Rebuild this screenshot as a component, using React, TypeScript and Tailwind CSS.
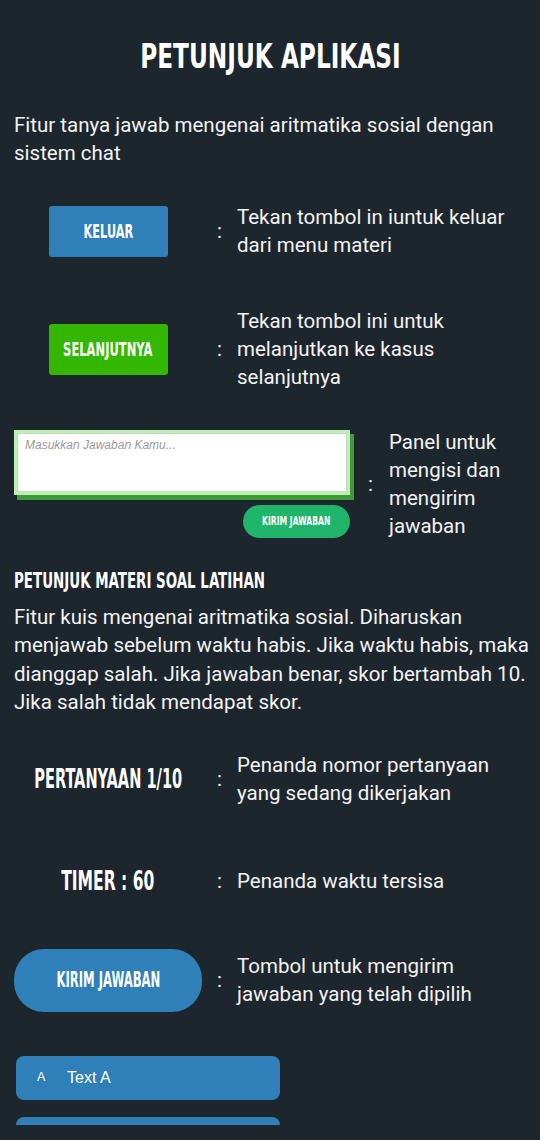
import React from "react";

const body = "font-['Roboto',sans-serif]";
const bebas = "font-['DejaVu_Sans_Condensed',sans-serif] font-bold text-white whitespace-nowrap inline-block shrink-0";

function Row({ left, children, top }: { left: React.ReactNode; children: React.ReactNode; top?: string }) {
  return (
    <div className={`flex items-center ${top ?? ""}`}>
      <div className="w-[188px] flex justify-center items-center shrink-0 leading-[28px]">{left}</div>
      <div className="w-[35px] text-center shrink-0 text-[20.5px] leading-[28px]">:</div>
      <div className="w-[280px] text-[20.5px] leading-[28px]">{children}</div>
    </div>
  );
}

export default function App() {
  return (
    <div className={`w-[540px] h-[1140px] bg-[#1e262d] text-[#f2f3f4] ${body} overflow-hidden`}>
      <div className="h-[1125px] overflow-hidden px-[14px]">
        <h1 className="flex justify-center pt-[36px] h-[76px] leading-[40px]">
          <span className={`${bebas} text-[34px] scale-x-[0.76]`}>PETUNJUK APLIKASI</span>
        </h1>
        <p className="mt-[35px] text-[20.5px] leading-[28px]">
          Fitur tanya jawab mengenai aritmatika sosial dengan sistem chat
        </p>

        <Row top="mt-[36px]" left={
          <div className="w-[119px] h-[51px] bg-[#2f80b8] rounded-[3px] flex items-center justify-center">
            <span className={`${bebas} text-[20px] scale-x-[0.63]`}>KELUAR</span>
          </div>
        }>
          Tekan tombol in iuntuk keluar dari menu materi
        </Row>

        <Row top="mt-[48px]" left={
          <div className="w-[119px] h-[51px] bg-[#33b700] rounded-[3px] flex items-center justify-center">
            <span className={`${bebas} text-[20px] scale-x-[0.64]`}>SELANJUTNYA</span>
          </div>
        }>
          Tekan tombol ini untuk melanjutkan ke kasus selanjutnya
        </Row>

        <div className="flex items-center mt-[37px]">
          <div className="w-[338px] shrink-0 flex flex-col items-end">
            <div className="w-[338px] h-[70px] relative">
              <div className="absolute left-[3px] top-[4px] right-[-2px] bottom-0 bg-[#3e9a3b]" />
              <div className="absolute left-0 top-0 right-[2px] bottom-[5px] bg-[#b8f2ad] p-[3px]">
                <div className="w-full h-full bg-white border border-[#cdd5cd] px-[7px] pt-[2px] leading-[16px]">
                  <span className="italic text-[12px] text-[#9a9a9a] font-['Liberation_Sans',sans-serif]">Masukkan Jawaban Kamu...</span>
                </div>
              </div>
            </div>
            <div className="mt-[5px] mr-[2px] w-[107px] h-[33px] rounded-full bg-[#21b46b] flex items-center justify-center">
              <span className={`${bebas} text-[12.5px] scale-x-[0.68]`}>KIRIM JAWABAN</span>
            </div>
          </div>
          <div className="w-[37px] text-center text-[20.5px] leading-[28px] shrink-0">:</div>
          <div className="w-[126px] text-[20.5px] leading-[28px]">Panel untuk mengisi dan mengirim jawaban</div>
        </div>

        <h2 className="mt-[29px] h-[24px] leading-[24px] flex">
          <span className={`${bebas} text-[21px] origin-left scale-x-[0.71]`}>PETUNJUK MATERI SOAL LATIHAN</span>
        </h2>
        <p className="mt-[10px] w-[524px] text-[20.5px] leading-[28.4px]">
          Fitur kuis mengenai aritmatika sosial. Diharuskan menjawab sebelum waktu habis. Jika waktu habis, maka dianggap salah. Jika jawaban benar, skor bertambah 10. Jika salah tidak mendapat skor.
        </p>

        <Row top="mt-[34px]" left={
          <span className={`${bebas} text-[27px] scale-x-[0.6]`}>PERTANYAAN 1/10</span>
        }>
          Penanda nomor pertanyaan yang sedang dikerjakan
        </Row>

        <Row top="mt-[60px]" left={
          <span className={`${bebas} text-[27px] scale-x-[0.64]`}>TIMER : 60</span>
        }>
          Penanda waktu tersisa
        </Row>

        <Row top="mt-[54px]" left={
          <div className="w-[188px] h-[63px] rounded-[30px] bg-[#2f80b8] flex items-center justify-center">
            <span className={`${bebas} text-[21px] scale-x-[0.615]`}>KIRIM JAWABAN</span>
          </div>
        }>
          Tombol untuk mengirim jawaban yang telah dipilih
        </Row>

        <div className="mt-[44px] ml-[2px] w-[264px] flex flex-col gap-[17px]">
          <div className="h-[44px] rounded-[8px] bg-[#2f80b8] flex items-center font-['Liberation_Sans',sans-serif]">
            <span className="w-[51px] pl-[21px] text-[12.5px] text-white">A</span>
            <span className="text-[16px] text-white">Text A</span>
          </div>
          <div className="h-[44px] rounded-[8px] bg-[#2f80b8]" />
        </div>
      </div>
    </div>
  );
}
